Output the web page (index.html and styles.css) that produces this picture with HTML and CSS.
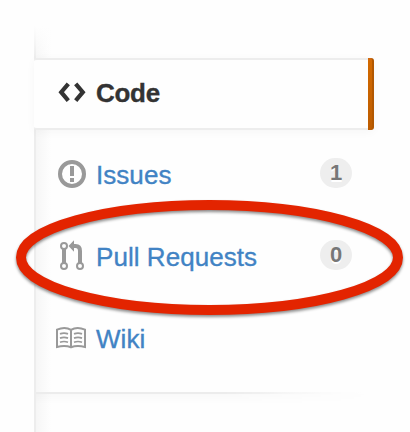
FILE: index.html
```html
<!DOCTYPE html>
<html lang="en">
<head>
<meta charset="utf-8">
<title>Repository navigation</title>
<link rel="stylesheet" href="styles.css">
</head>
<body>
<nav class="sidebar">
  <a class="item selected">
    <svg class="icon" width="30" height="30" viewBox="0 0 30 30"><path d="M12.3 4.800 5.200 13.200l7.100 8.400M19.700 4.800l7.100 8.400-7.100 8.400" fill="none" stroke="#333" stroke-width="4.200"/></svg>
    <span class="label">Code</span>
  </a>
  <div class="links">
    <a class="item">
      <svg class="icon" width="30" height="30" viewBox="0 0 30 30"><circle cx="16" cy="14" r="12" fill="none" stroke="#999" stroke-width="4"/><path d="M14 6h4v10h-4zM14 18h4v4h-4z" fill="#999"/></svg>
      <span class="label">Issues</span>
      <span class="count">1</span>
    </a>
    <a class="item">
      <svg class="icon" width="30" height="30" viewBox="0 0 30 30"><g fill="none" stroke="#999"><circle cx="8" cy="4" r="3" stroke-width="2"/><circle cx="8" cy="24" r="3" stroke-width="2"/><circle cx="24" cy="24" r="3" stroke-width="2"/><path d="M8 7v14M17 4h2.500q4.500 0 4.500 5V21" stroke-width="4"/></g><path d="M12.500 4 18-1.700V9.700z" fill="#999"/></svg>
      <span class="label">Pull Requests</span>
      <span class="count">0</span>
    </a>
    <a class="item">
      <svg class="icon" width="30" height="30" viewBox="0 0 30 30"><g fill="none" stroke="#999"><path d="M1 5.700q8-3.400 14 .2 6-3.600 14-.2v17.300q-8-2-14 .3-6-2.300-14-.3zM15 5.500v18" stroke-width="2"/><path d="M4 9.900q4-1.600 8 0M4 14.100q4-1.600 8 0M4 18.300q4-1.600 8 0M18 9.900q4-1.600 8 0M18 14.100q4-1.600 8 0M18 18.300q4-1.600 8 0" stroke-width="1.700"/></g></svg>
      <span class="label">Wiki</span>
    </a>
  </div>
  <div class="after"></div>
</nav>
<svg class="highlight" width="410" height="432" viewBox="0 0 410 432"><ellipse cx="209.500" cy="257.500" rx="188.500" ry="52.500" fill="none" stroke="#e32400" stroke-width="10"/></svg>
</body>
</html>
```
FILE: styles.css
```css
body {
  margin: 0;
  width: 410px;
  height: 432px;
  overflow: hidden;
  background: #fefefe;
  font-family: "Liberation Sans", Arial, sans-serif;
}
.sidebar {
  box-sizing: border-box;
  height: 432px;
  margin-left: 34px;
  padding-top: 58px;
  background:
    linear-gradient(#fefefe 26px, transparent 58px) 0 0 / 100% 58px no-repeat,
    linear-gradient(90deg, #ededed 2px, #f6f6f6 2px, #fefefe 17px);
}
.item {
  display: flex;
  align-items: center;
  box-sizing: border-box;
  height: 82px;
  padding: 0 22px;
  color: #4183c4;
  font-size: 26px;
  line-height: 30px;
}
.selected {
  position: relative;
  width: 340px;
  height: 72px;
  border-top: 2px solid #ededed;
  border-bottom: 2px solid #ededed;
  border-radius: 3px;
  background: #fefefe;
  color: #333;
  font-weight: bold;
  box-shadow: 0 2px 10px rgba(0, 0, 0, .035);
}
.selected::after {
  content: "";
  position: absolute;
  top: -2px;
  right: 0;
  box-sizing: border-box;
  width: 6px;
  height: 72px;
  border-right: 2px solid #b25700;
  border-radius: 0 3px 3px 0;
  background: linear-gradient(#d26911, #d26900 5%, #bd5c00);
}
.icon {
  flex: none;
  overflow: visible;
  margin-right: 10px;
}
.label {
  padding-bottom: 1px;
  -webkit-text-stroke: .35px currentColor;
}
.selected .label {
  padding-bottom: 3px;
  letter-spacing: -.3px;
}
.links {
  box-sizing: border-box;
  height: 262px;
  padding-top: 4px;
}
.links .label {
  letter-spacing: .05px;
}
.count {
  width: 32px;
  height: 30px;
  margin: 0 36px 4px auto;
  border-radius: 15px;
  background: #eee;
  color: #777;
  font-size: 22px;
  font-weight: bold;
  text-align: center;
  text-shadow: 0 2px 0 #fff;
}
.after {
  height: 10px;
  margin-left: 2px;
  border-top: 2px solid;
  border-image: linear-gradient(90deg, #ececec 60%, #fefefe 90%) 1;
  background: linear-gradient(rgba(0, 0, 0, .02), transparent);
  mask-image: linear-gradient(90deg, #000 50%, transparent 92%);
}
.highlight {
  position: absolute;
  top: 0;
  left: 0;
  filter: drop-shadow(0 2px 1.500px rgba(0, 0, 0, .45));
}
```
